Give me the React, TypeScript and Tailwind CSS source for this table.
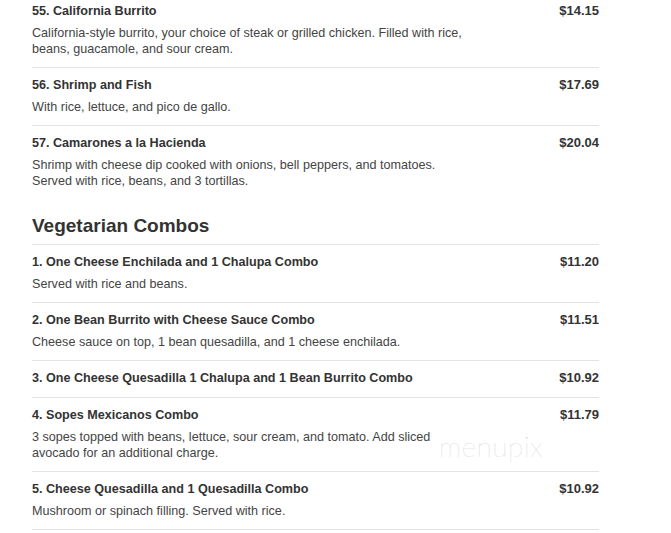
import React from 'react';

type Item = { name: string; price: string; desc?: string[] };

const burritos: Item[] = [
  {
    name: '55. California Burrito',
    price: '$14.15',
    desc: ['California-style burrito, your choice of steak or grilled chicken. Filled with rice,', 'beans, guacamole, and sour cream.'],
  },
  { name: '56. Shrimp and Fish', price: '$17.69', desc: ['With rice, lettuce, and pico de gallo.'] },
  {
    name: '57. Camarones a la Hacienda',
    price: '$20.04',
    desc: ['Shrimp with cheese dip cooked with onions, bell peppers, and tomatoes.', 'Served with rice, beans, and 3 tortillas.'],
  },
];

const veggie: Item[] = [
  { name: '1. One Cheese Enchilada and 1 Chalupa Combo', price: '$11.20', desc: ['Served with rice and beans.'] },
  { name: '2. One Bean Burrito with Cheese Sauce Combo', price: '$11.51', desc: ['Cheese sauce on top, 1 bean quesadilla, and 1 cheese enchilada.'] },
  { name: '3. One Cheese Quesadilla 1 Chalupa and 1 Bean Burrito Combo', price: '$10.92' },
  {
    name: '4. Sopes Mexicanos Combo',
    price: '$11.79',
    desc: ['3 sopes topped with beans, lettuce, sour cream, and tomato. Add sliced', 'avocado for an additional charge.'],
  },
  { name: '5. Cheese Quesadilla and 1 Quesadilla Combo', price: '$10.92', desc: ['Mushroom or spinach filling. Served with rice.'] },
];

const MenuRow = ({ item, className }: { item: Item; className: string }) => (
  <div className={className}>
    <div className="flex justify-between">
      <span className="text-[12.6px] leading-[18px] font-bold text-[#333]">{item.name}</span>
      <span className="text-[13px] leading-[18px] font-bold text-[#333]">{item.price}</span>
    </div>
    {item.desc && (
      <p className="mt-[5px] text-[12.6px] leading-4 text-[#444]">
        {item.desc.map((line, i) => (
          <React.Fragment key={i}>
            {line}
            {i < item.desc!.length - 1 && <br />}
          </React.Fragment>
        ))}
      </p>
    )}
  </div>
);

export default function App() {
  return (
    <div className="relative w-[671px] h-[533px] overflow-hidden bg-white" style={{ fontFamily: '"Liberation Sans", Arial, sans-serif' }}>
      <div className="ml-8 w-[567px] -mt-1.5">
        {burritos.map((it, i) => (
          <MenuRow
            key={it.name}
            item={it}
            className={i < burritos.length - 1 ? 'pt-2 pb-2.5 border-b border-[#e3e3e3]' : 'pt-2 pb-2.5'}
          />
        ))}

        <h2 className="mt-[15px] pb-[6px] text-[19px] leading-[24px] font-bold text-[#333] border-b border-[#e3e3e3]">
          Vegetarian Combos
        </h2>

        {veggie.map((it) => (
          <MenuRow key={it.name} item={it} className="pt-2 pb-2.5 border-b border-[#e3e3e3]" />
        ))}
      </div>

      {/* watermark */}
      <div className="absolute left-[439px] top-[431px] text-[28px] leading-[30px] font-extralight tracking-[0.5px] text-[#c9c9c9]" style={{ fontFamily: 'Lato, sans-serif' }}>
        menupix
      </div>
    </div>
  );
}
